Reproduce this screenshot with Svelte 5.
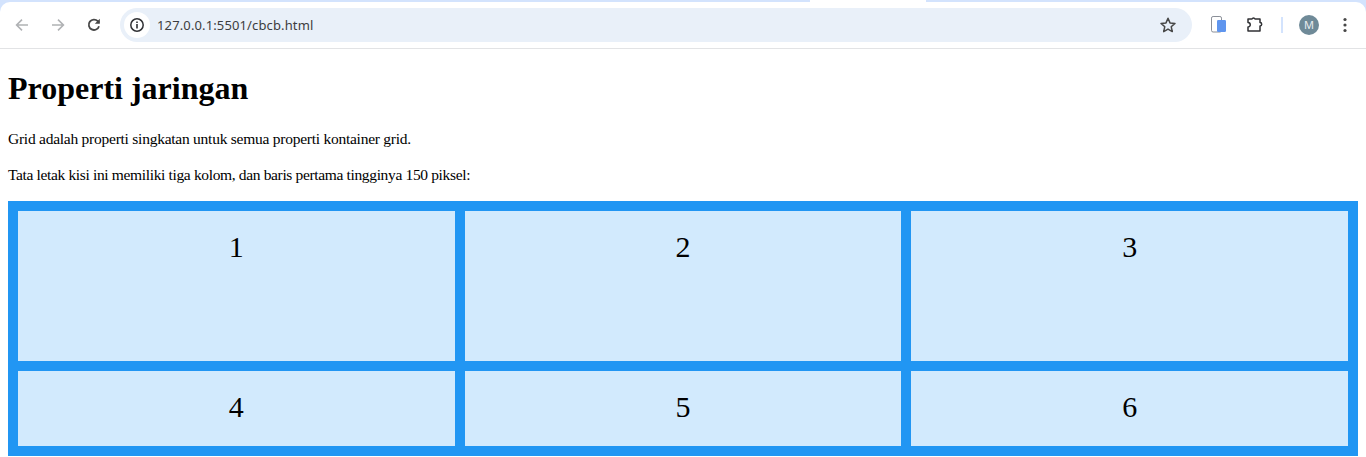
<script>
    const cells = [1, 2, 3, 4, 5, 6];
</script>

<header class="chrome">
    <div class="tabstrip">
        <span class="tab-active"></span>
    </div>
    <div class="toolbar">
        <button class="nav" aria-label="Back">
            <svg width="16" height="16" viewBox="0 0 16 16"><path d="M14 8H3M8 2.6 2.6 8 8 13.4" fill="none" stroke="#b0b2b4" stroke-width="1.6"/></svg>
        </button>
        <button class="nav" aria-label="Forward">
            <svg width="16" height="16" viewBox="0 0 16 16"><path d="M2 8h11M8 2.6 13.4 8 8 13.4" fill="none" stroke="#b0b2b4" stroke-width="1.6"/></svg>
        </button>
        <button class="nav" aria-label="Reload">
            <svg width="16" height="16" viewBox="0 0 16 16"><path d="M13 9.2A5.2 5.2 0 1 1 11.8 4.2L13.2 5.6" fill="none" stroke="#474747" stroke-width="1.8"/><path d="M13.8 1.8v5h-5z" fill="#474747"/></svg>
        </button>
        <div class="omnibox">
            <span class="site-info">
                <svg width="16" height="16" viewBox="0 0 16 16"><circle cx="8" cy="8" r="6.2" fill="none" stroke="#303134" stroke-width="1.5"/><path d="M8 7v4.4M8 4.4v1.6" stroke="#303134" stroke-width="1.6"/></svg>
            </span>
            <span class="url">127.0.0.1:5501/cbcb.html</span>
            <svg class="star" width="18" height="18" viewBox="0 0 18 18"><path d="M9 2.3l2 4.6 5 .5-3.8 3.3 1.1 4.9L9 13.1l-4.3 2.5 1.1-4.9L2 7.4l5-.5z" fill="none" stroke="#474747" stroke-width="1.5" stroke-linejoin="round"/></svg>
        </div>
        <div class="actions">
            <svg class="phone" width="16" height="20" viewBox="0 0 16 20"><rect x="1.500" y="1.500" width="10" height="15.500" rx="1.600" fill="#fff" stroke="#8a8f98" stroke-width="1"/><rect x="7" y="5" width="9" height="12" rx="1.200" fill="#5f95ee"/></svg>
            <svg class="puzzle" width="20" height="20" viewBox="0 0 20 20"><path d="M3 4H7a1.600 1.600 0 0 1 3 0H15V7.500a1.700 1.700 0 0 1 0 3.400V16H3V12a2 2 0 0 0 0-4.500Z" fill="none" stroke="#303134" stroke-width="1.500" stroke-linejoin="round"/></svg>
            <span class="divider"></span>
            <span class="avatar">M</span>
            <svg class="dots" width="4" height="16" viewBox="0 0 4 16"><circle cx="2" cy="2.500" r="1.600" fill="#474747"/><circle cx="2" cy="8" r="1.600" fill="#474747"/><circle cx="2" cy="13.500" r="1.600" fill="#474747"/></svg>
        </div>
    </div>
</header>

<main>
    <h1>Properti jaringan</h1>
    <p class="first">Grid adalah properti singkatan untuk semua properti kontainer grid.</p>
    <p class="second">Tata letak kisi ini memiliki tiga kolom, dan baris pertama tingginya 150 piksel:</p>
    <div class="grid-container">
        {#each cells as cell}
            <div class="grid-item">{cell}</div>
        {/each}
    </div>
</main>

<style>
    :global(body) {
        margin: 0;
        background: #fff;
        font-family: "Liberation Serif", serif;
        color: #000;
    }

    .chrome {
        background: #d3e3fd;
        height: 49px;
    }

    .tabstrip {
        height: 2px;
    }

    .tab-active {
        display: block;
        margin-left: 810px;
        width: 116px;
        height: 2px;
        background: #fff;
    }

    .toolbar {
        height: 46px;
        background: #fff;
        border-radius: 10px 10px 0 0;
        border-bottom: 1px solid #e2e3e5;
        display: flex;
        align-items: center;
        padding: 0 0 0 4px;
        box-sizing: content-box;
    }

    .nav {
        width: 36px;
        height: 34px;
        padding: 0;
        border: none;
        background: none;
        display: flex;
        align-items: center;
        justify-content: center;
    }

    .omnibox {
        margin-left: 8px;
        width: 1072px;
        height: 34px;
        border-radius: 17px;
        background: #e9f0f9;
        display: flex;
        align-items: center;
    }

    .site-info {
        width: 26px;
        height: 26px;
        margin-left: 4px;
        border-radius: 50%;
        background: #fff;
        display: flex;
        align-items: center;
        justify-content: center;
    }

    .url {
        margin-left: 7px;
        font-family: "Noto Sans", sans-serif;
        font-size: 13px;
        letter-spacing: 0.13px;
        color: #3c3d40;
    }

    .star {
        margin-left: auto;
        margin-right: 15px;
    }

    .actions {
        flex: 1;
        display: flex;
        align-items: center;
    }

    .phone {
        margin-left: 18px;
    }

    .puzzle {
        margin-left: 19px;
    }

    .divider {
        width: 2px;
        height: 16px;
        margin-left: 16px;
        background: #d3e3fd;
    }

    .avatar {
        width: 20px;
        height: 20px;
        margin-left: 16px;
        border-radius: 50%;
        background: #6f8a98;
        color: #e8edf0;
        font-family: "Noto Sans", sans-serif;
        font-size: 11px;
        line-height: 20px;
        text-align: center;
    }

    .dots {
        margin-left: 24px;
    }

    main {
        padding: 0 8px;
    }

    h1 {
        font-size: 32px;
        font-weight: bold;
        margin: 21.44px 0;
    }

    p {
        font-size: 15.5px;
        line-height: 20px;
        margin: 16px 0;
    }

    .first {
        letter-spacing: -0.25px;
    }

    .second {
        letter-spacing: -0.35px;
    }

    .grid-container {
        display: grid;
        grid-template-columns: auto auto auto;
        grid-template-rows: 150px auto;
        gap: 10px;
        padding: 10px;
        background: #2196f3;
    }

    .grid-item {
        background: rgba(255, 255, 255, 0.8);
        text-align: center;
        padding: 18px 20px 22px;
        font-size: 30px;
        line-height: 35px;
    }
</style>
